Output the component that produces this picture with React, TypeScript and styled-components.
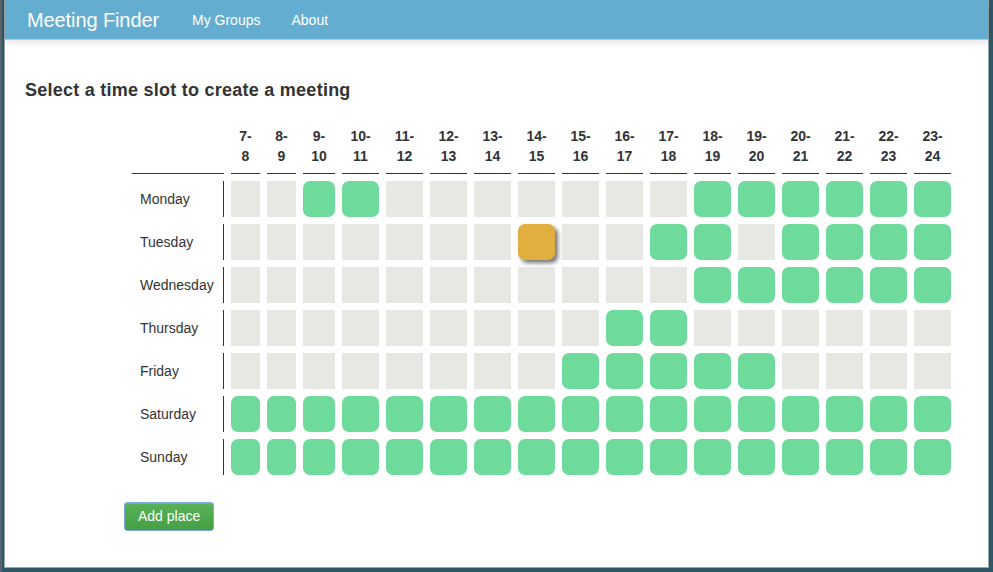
import React from "react";
import styled, { createGlobalStyle, css } from "styled-components";

const GlobalStyle = createGlobalStyle`
  html, body {
    margin: 0;
    padding: 0;
    width: 993px;
    height: 572px;
    overflow: hidden;
    background: #35535f;
    font-family: "Liberation Sans", Arial, sans-serif;
    color: #333;
  }
  * { box-sizing: border-box; }
`;

const Frame = styled.div`
  width: 993px;
  height: 572px;
  padding: 0 4px 4px 4px;
  background: linear-gradient(90deg, #5a646a 0, #5a646a 2px, #2d5868 2px, #2d5868 100%);
`;

const Window = styled.div`
  height: 568px;
  background: #fff;
  border-left: 1px solid #9aa6ab;
  border-right: 1px solid #9aa6ab;
  border-bottom: 1px solid #9aa6ab;
  display: flex;
  flex-direction: column;
`;

const Navbar = styled.nav`
  height: 40px;
  flex: none;
  background: #63aed0;
  border-bottom: 1px solid #a9cfe0;
  box-shadow: 0 3px 7px rgba(0, 0, 0, 0.1);
  display: flex;
  align-items: center;
  padding-left: 22px;
  position: relative;
  z-index: 1;
`;

const Brand = styled.span`
  color: #fff;
  font-size: 20px;
  line-height: 20px;
  margin-right: 18px;
  letter-spacing: -0.1px;
`;

const NavLink = styled.a`
  color: #fff;
  font-size: 14px;
  line-height: 20px;
  padding: 0 16px 0 15px;
  text-decoration: none;
`;

const Content = styled.main`
  padding: 40px 20px 0 20px;
  display: flex;
  flex-direction: column;
`;

const Heading = styled.h4`
  margin: 0;
  font-size: 18px;
  line-height: 20px;
  font-weight: bold;
  letter-spacing: 0.25px;
  color: #333;
`;

const Schedule = styled.div`
  margin: 18px 0 0 107px;
  display: grid;
  grid-template-columns: 92px 29px 29px 32px repeat(14, 37px);
  grid-auto-rows: auto;
  column-gap: 7px;
  row-gap: 7px;
`;

const HeadCell = styled.div`
  padding: 8px 0 7px;
  border-bottom: 1px solid #333;
  font-size: 14px;
  line-height: 20px;
  font-weight: bold;
  text-align: center;
  color: #333;
`;

const DayLabel = styled.div`
  height: 36px;
  padding-left: 8px;
  border-right: 1px solid #333;
  display: flex;
  align-items: center;
  font-size: 14px;
  color: #333;
`;

type SlotState = "g" | "G" | "O";

const Slot = styled.div<{ $state: SlotState }>`
  height: 36px;
  background: #e7e7e3;
  cursor: pointer;
  ${(p) =>
    p.$state === "G" &&
    css`
      background: #6edb9d;
      border-radius: 7px;
    `}
  ${(p) =>
    p.$state === "O" &&
    css`
      background: #e1ae40;
      border-radius: 7px;
      box-shadow: 3px 3px 4px rgba(0, 0, 0, 0.55);
    `}
`;

const ButtonRow = styled.div`
  margin: 27px 0 0 99px;
`;

const AddButton = styled.button`
  height: 29px;
  padding: 0 13px;
  font-family: "Liberation Sans", Arial, sans-serif;
  font-size: 14px;
  line-height: 27px;
  color: #fff;
  background: linear-gradient(#58b358, #459f45);
  border: 1px solid #7ea9e0;
  border-radius: 3px;
  box-shadow: inset 0 1px 0 rgba(255, 255, 255, 0.15);
  cursor: pointer;
`;

const hours = Array.from({ length: 17 }, (_, i) => i + 7);

const days: { name: string; slots: string }[] = [
  { name: "Monday", slots: "ggGGgggggggGGGGGG" },
  { name: "Tuesday", slots: "gggggggOggGGgGGGG" },
  { name: "Wednesday", slots: "gggggggggggGGGGGG" },
  { name: "Thursday", slots: "gggggggggGGgggggg" },
  { name: "Friday", slots: "ggggggggGGGGGgggg" },
  { name: "Saturday", slots: "GGGGGGGGGGGGGGGGG" },
  { name: "Sunday", slots: "GGGGGGGGGGGGGGGGG" },
];

export default function App() {
  return (
    <>
      <GlobalStyle />
      <Frame>
        <Window>
          <Navbar>
            <Brand>Meeting Finder</Brand>
            <NavLink href="#">My Groups</NavLink>
            <NavLink href="#">About</NavLink>
          </Navbar>
          <Content>
            <Heading>Select a time slot to create a meeting</Heading>
            <Schedule>
              <HeadCell>
                &nbsp;
                <br />
                &nbsp;
              </HeadCell>
              {hours.map((h) => (
                <HeadCell key={h}>
                  {h}-
                  <br />
                  {h + 1}
                </HeadCell>
              ))}
              {days.map((d) => (
                <React.Fragment key={d.name}>
                  <DayLabel>{d.name}</DayLabel>
                  {d.slots.split("").map((s, i) => (
                    <Slot key={i} $state={s as SlotState} />
                  ))}
                </React.Fragment>
              ))}
            </Schedule>
            <ButtonRow>
              <AddButton>Add place</AddButton>
            </ButtonRow>
          </Content>
        </Window>
      </Frame>
    </>
  );
}
